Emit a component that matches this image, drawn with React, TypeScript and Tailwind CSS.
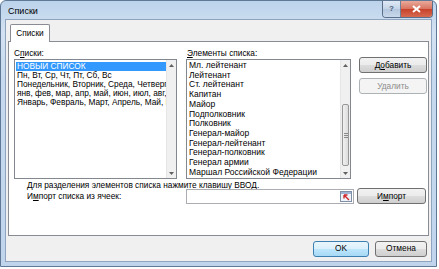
import React from 'react';

const leftItems = [
  'НОВЫЙ СПИСОК',
  'Пн, Вт, Ср, Чт, Пт, Сб, Вс',
  'Понедельник, Вторник, Среда, Четверг, Пятница, Суббота, Воскресенье',
  'янв, фев, мар, апр, май, июн, июл, авг, сен, окт, ноя, дек',
  'Январь, Февраль, Март, Апрель, Май, Июнь, Июль',
];

const rightItems = [
  'Мл. лейтенант',
  'Лейтенант',
  'Ст. лейтенант',
  'Капитан',
  'Майор',
  'Подполковник',
  'Полковник',
  'Генерал-майор',
  'Генерал-лейтенант',
  'Генерал-полковник',
  'Генерал армии',
  'Маршал Российской Федерации',
];

function Btn({
  children,
  className = '',
  disabled,
  primary,
}: {
  children: React.ReactNode;
  className?: string;
  disabled?: boolean;
  primary?: boolean;
}) {
  const look = disabled
    ? 'border-[#adb2b5] bg-[#f4f4f4] text-[#8d8d8d]'
    : primary
      ? 'border-[#3c7fb1] bg-[linear-gradient(#eaf6fd_0%,#d9f0fc_50%,#bee6fd_50%,#a7d9f5_100%)] text-black'
      : 'border-[#707070] bg-[linear-gradient(#f2f2f2_0%,#ebebeb_50%,#dddddd_50%,#cfcfcf_100%)] text-black';
  return (
    <div className={`flex items-center justify-center rounded-[3px] border text-[8.3px] ${look} ${className}`}>
      {children}
    </div>
  );
}

function Arrow({ up }: { up?: boolean }) {
  return (
    <div className="flex h-[10px] w-full items-center justify-center">
      <svg width="5" height="3" viewBox="0 0 5 3">
        <path d={up ? 'M0 3 L2.5 0 L5 3 Z' : 'M0 0 L2.5 3 L5 0 Z'} fill="#606060" />
      </svg>
    </div>
  );
}

function ScrollBar({ thumb }: { thumb?: boolean }) {
  return (
    <div className="flex w-[10px] shrink-0 flex-col border-l border-[#e6e6e6] bg-[#f0f0f0]">
      <Arrow up />
      <div className="flex flex-1 flex-col justify-end pb-[2px]">
        {thumb && (
          <div className="mx-[1px] flex h-[62px] items-center justify-center rounded-[2px] border border-[#979797] bg-[linear-gradient(90deg,#f1f1f1,#dcdcdc)]">
            <div className="flex flex-col gap-[1px]">
              <div className="h-px w-[4px] bg-[#8a8a8a]" />
              <div className="h-px w-[4px] bg-[#8a8a8a]" />
              <div className="h-px w-[4px] bg-[#8a8a8a]" />
            </div>
          </div>
        )}
      </div>
      <Arrow />
    </div>
  );
}

function RefIcon() {
  return (
    <svg width="12" height="11" viewBox="0 0 12 11">
      <rect x="0.5" y="0.5" width="11" height="10" fill="#eef3fa" stroke="#7f8fa6" />
      <rect x="1" y="1" width="10" height="2" fill="#9fb5d3" />
      <path d="M4 4 L9 9 M4 4 L4 7.5 M4 4 L7.5 4" stroke="#d0272a" strokeWidth="1.4" fill="none" />
    </svg>
  );
}

export default function App() {
  return (
    <div className="h-[269px] w-[439px] overflow-hidden bg-white font-['Liberation_Sans',Arial,sans-serif] text-black">
      <div className="flex h-[267px] w-[437px] flex-col rounded-t-[6px] border border-[#5e7896] bg-[linear-gradient(#bcd3eb_0%,#d3e2f2_12%,#c6d9ee_30%,#c0d5ec_100%)]">
        {/* title bar */}
        <div className="flex h-[18px] shrink-0 items-start justify-between">
          <div className="pl-[7px] pt-[5px] text-[9px] leading-[10px]">Списки</div>
          <div className="mr-[3px] flex h-[17px] overflow-hidden rounded-b-[4px] border border-t-0 border-[#5a6f8c]">
            <div className="flex w-[18px] items-center justify-center border-r border-[#6f8199] bg-[linear-gradient(#dfe9f5,#c4d4e7_50%,#b3c6de_50%,#c9d8ea)] text-[8px] font-bold text-[#4a5d7a]">
              ?
            </div>
            <div className="flex w-[31px] items-center justify-center bg-[linear-gradient(#e9a99b,#d8735f_50%,#c7402a_50%,#d56a4f)]">
              <svg width="9" height="8" viewBox="0 0 9 8">
                <path d="M1 1 L8 7 M8 1 L1 7" stroke="#ffffff" strokeWidth="2" />
              </svg>
            </div>
          </div>
        </div>

        {/* client area */}
        <div className="mx-[4px] mb-[4px] flex flex-1 flex-col border border-[#8ea4bf] bg-[#f0f0f0]">
          <div className="flex pl-[4px] pt-[4px]">
            <div className="relative z-10 -mb-px flex h-[18px] w-[40px] items-center justify-center rounded-t-[2px] border border-b-0 border-[#898c95] bg-white text-[8.3px]">
              Списки
            </div>
          </div>

          <div className="mx-[2px] flex h-[195px] flex-col border border-[#898c95] bg-white pl-[5px] pt-[6px]">
            <div className="flex">
              <div className="flex w-[163px] flex-col">
                <div className="h-[10px] text-[8.3px] leading-[10px]">
                  С<u>п</u>иски:
                </div>
                <div className="mt-[1px] flex h-[120px] border border-[#828790]">
                  <div className="flex min-w-0 flex-1 flex-col overflow-hidden pl-px pt-[2px]">
                    {leftItems.map((t, i) => (
                      <div
                        key={t}
                        className={`overflow-hidden whitespace-nowrap pl-[1px] text-[8.3px] leading-[9px] ${i === 0 ? 'bg-[#3399ff] text-white' : ''}`}
                      >
                        {t}
                      </div>
                    ))}
                  </div>
                  <ScrollBar />
                </div>
              </div>

              <div className="ml-[9px] flex w-[165px] flex-col">
                <div className="h-[10px] pl-px text-[8.3px] leading-[10px]">
                  <u>Э</u>лементы списка:
                </div>
                <div className="mt-[1px] flex h-[120px] border border-[#828790]">
                  <div className="flex min-w-0 flex-1 flex-col overflow-hidden pl-[2px] pt-[1px]">
                    {rightItems.map((t) => (
                      <div key={t} className="whitespace-nowrap text-[8.5px] leading-[9.7px]">
                        {t}
                      </div>
                    ))}
                  </div>
                  <ScrollBar thumb />
                </div>
              </div>

              <div className="ml-[8px] flex w-[68px] flex-col gap-[5px] pt-[9px]">
                <Btn className="h-[16px]">
                  Д<u>о</u>бавить
                </Btn>
                <Btn className="h-[16px]" disabled>
                  Удалить
                </Btn>
              </div>
            </div>

            <div className="mt-[1px] pl-[13px] text-[8.3px] leading-[10px]">
              Для разделения элементов списка нажмите клавишу ВВОД.
            </div>
            <div className="-mt-[2px] flex items-center">
              <div className="w-[172px] pl-[13px] text-[8.3px] leading-[10px]">
                И<u>м</u>порт списка из ячеек:
              </div>
              <div className="flex h-[15px] w-[168px] items-center justify-end border border-[#abadb3] bg-white pr-[1px]">
                <RefIcon />
              </div>
              <Btn className="ml-[3px] h-[16px] w-[69px]">
                И<u>м</u>порт
              </Btn>
            </div>
          </div>

          <div className="flex flex-1 items-center justify-end gap-[6px] pr-[4px]">
            <Btn primary className="h-[16px] w-[56px]">
              OK
            </Btn>
            <Btn className="h-[16px] w-[52px]">Отмена</Btn>
          </div>
        </div>
      </div>
    </div>
  );
}
